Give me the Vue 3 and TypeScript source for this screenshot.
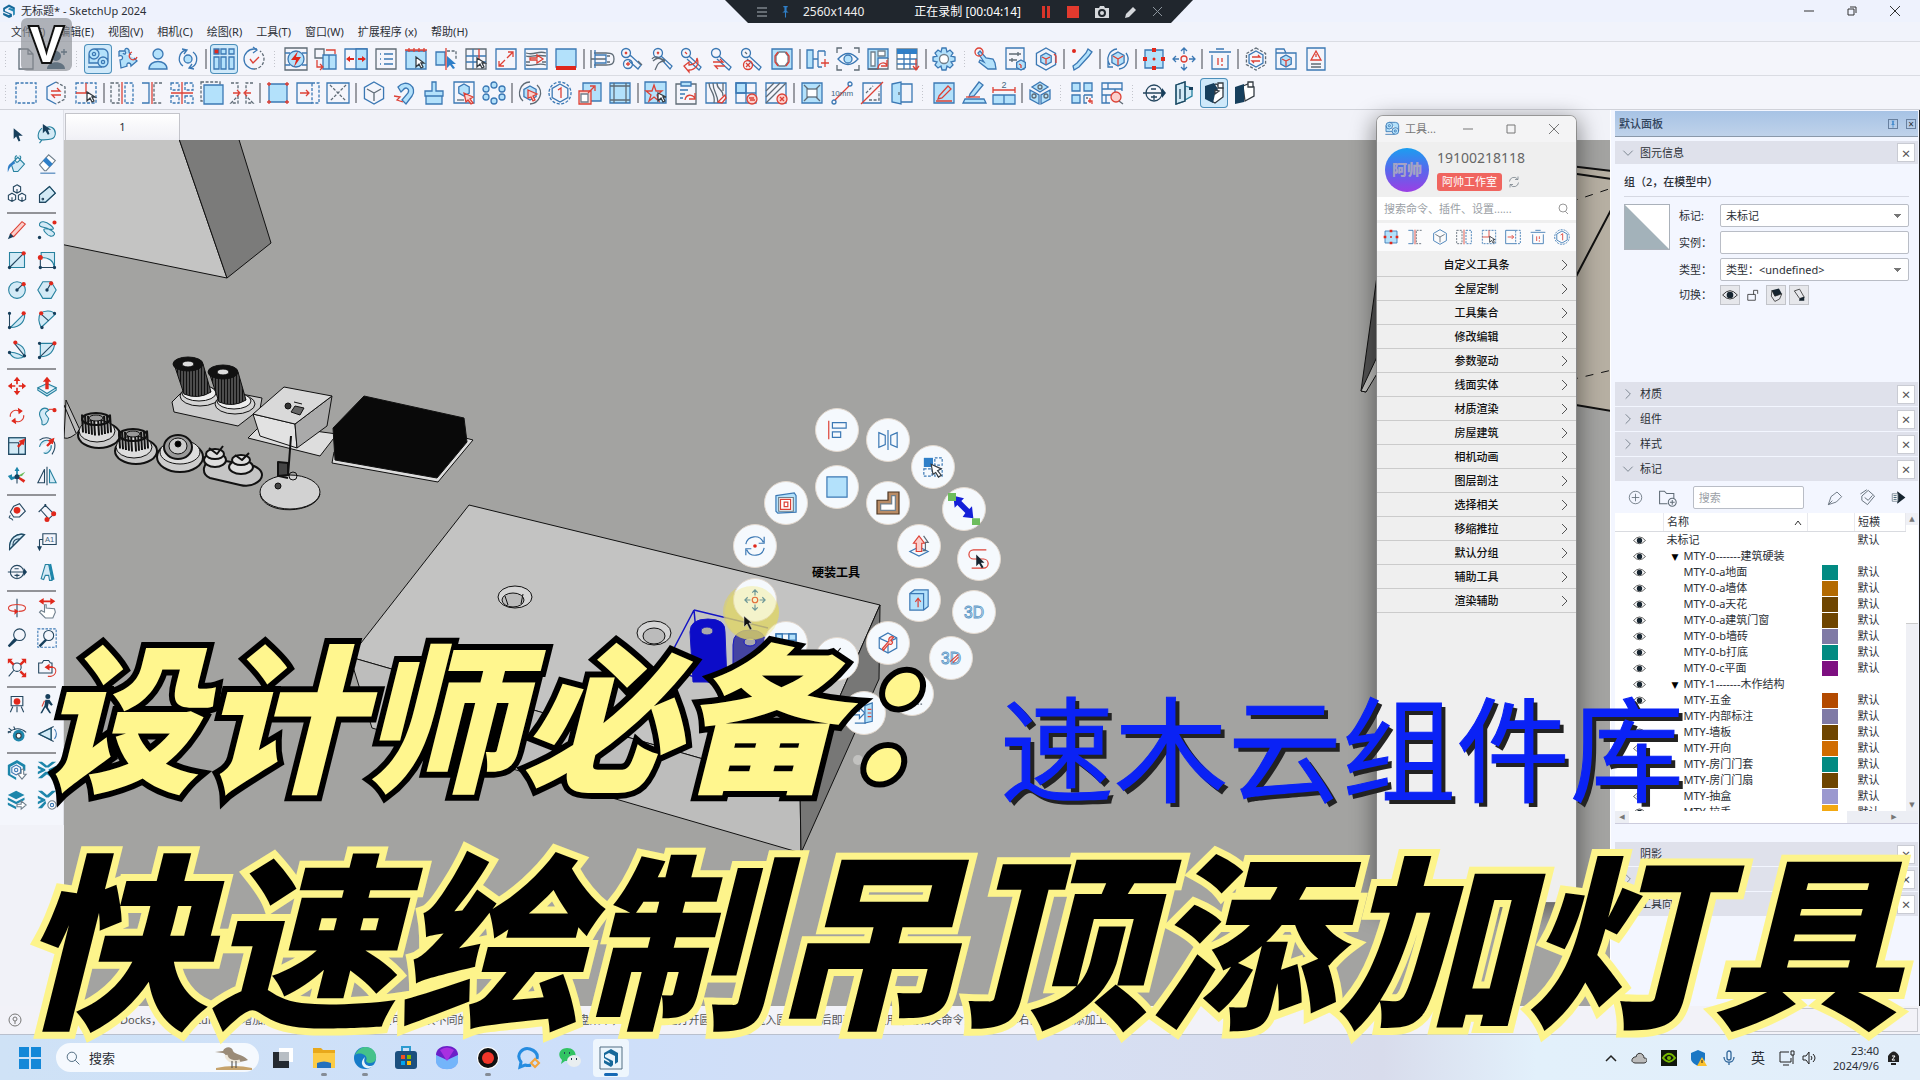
<script setup lang="ts">
import { h, ref, type FunctionalComponent } from 'vue'

// Icon notation: "kind:path" parts joined by "|".
// In a path, @cx,cy,r is a circle, #x,y,w,h a rectangle and %cx,cy,r a hexagon.
const kinds: Record<string, Record<string, string>> = {
  b: { stroke: '#3b78b4', fill: 'none' },
  f: { stroke: '#3b78b4', fill: '#b3e1fb' },
  B: { fill: '#2f7fc8' },
  r: { stroke: '#dd4136', fill: 'none' },
  R: { fill: '#e0281c' },
  g: { stroke: '#5f6b76', fill: 'none' },
  G: { fill: '#16242f' },
  d: { stroke: '#3b78b4', fill: 'none', 'stroke-dasharray': '3 1.6' },
  e: { stroke: '#5f6b76', fill: 'none', 'stroke-dasharray': '3 1.6' },
  p: { stroke: '#dd4136', fill: '#fbd0cc' },
  n: { stroke: '#24465f', fill: 'none' },
  N: { fill: '#173f5c' },
  t: { stroke: '#26819f', fill: '#d3eaf6' },
  T: { fill: '#1d86ab' },
  w: { stroke: '#333b42', fill: '#ffffff' },
  k: { stroke: '#222222', fill: 'none' },
  v: { fill: '#1420d8' },
  y: { fill: '#6dbd5c' },
  s: { stroke: '#6f7f8c', fill: '#ffffff' },
  o: { stroke: '#4a3422', fill: '#b98c66' }
}

const expand = (d: string): string =>
  d
    .replace(/@([\d.]+),([\d.]+),([\d.]+)/g, (_m, x, y, r) => `M${+x - +r} ${y}a${r} ${r} 0 1 0 ${2 * +r} 0a${r} ${r} 0 1 0 ${-2 * +r} 0z`)
    .replace(/#([\d.]+),([\d.]+),([\d.]+),([\d.]+)/g, (_m, x, y, w, t) => `M${x} ${y}h${w}v${t}h-${w}z`)
    .replace(/%([\d.]+),([\d.]+),([\d.]+)/g, (_m, x, y, r) => {
      const a = +r * 0.87
      const b = +r / 2
      return `M${x} ${+y - +r}l${a} ${b}v${r}l${-a} ${b}l${-a} ${-b}v${-+r}z`
    })

const icons: Record<string, string> = {
  doc: 'g:M5 2h9l5 5v15H5zM14 2v5h5',
  addUser: 'N:@12,9,5 M3 22c0-9 18-9 18 0z|n:M20 2v6M17 5h6',
  tape: 'f:@8,7,5 @17,15,5 M3 7v9h9M8 2h9a5 5 0 0 1 5 5v8|b:@8,7,1.6 @17,15,1.6 M2 20h14',
  puzzle: 'f:M3 4h6c-1-4 5-3 4 1l2 3M9 4c2 3-1 4-2 2M3 4v5c4-2 5 4 1 4l1 8 6-2c-1-4 4-4 4 0l6-5-3-3|r:M16 5a4 4 0 1 0 5 5',
  user: 'f:@12,7,5 M3 22c0-10 18-10 18 0z',
  sync: 'b:M7 19A9 9 0 0 1 10 3M17 5a9 9 0 0 1-3 16M6 2l5 1-3 4M18 22l-5-1 3-4|f:@12,12,4',
  grid: 'f:#9,2,5,5 #17,2,5,5 #2,10,5,12 #9,10,5,12 #17,10,5,12|R:#2,2,5,5|b:#2,2,5,5',
  clock: 'b:M12 2a10 10 0 0 0 0 20M12 2h3|e:M12 22a10 10 0 0 0 6-18|b:M11 0l4 3-4 3|r:M8 12l3 4 6-6',
  flash: 'g:#1,1,22,22|f:@12,12,8|b:M1 6h5M18 6h5M1 18h5M18 18h5|R:M14 4l-7 9h5l-2 7 7-10h-5z',
  swapDoor: 'g:#1,2,9,9 |f:#9,8,13,14|b:M15 8v14|r:M12 3h9v4M3 13v7h5M6 17l3 3-3 3',
  split: 'b:#1,2,22,20|f:#12,2,11,20|R:M2 12l4-3v2h4v2H6v2zM22 12l-4-3v2h-4v2h4v2z',
  list: 'g:#2,2,20,20|b:M6 7h1M6 12h1M6 17h1M10 7h9M10 12h9M10 17h9',
  sheet: 'f:#2,4,20,18|r:M1 3h22M5 1v4M10 1v4M15 1v4M20 1v4|w:M12 10v10l3-3 2 4 2-1-2-4h3z',
  pickLeft: 'f:#2,5,9,13|r:M12 1v22|e:M13 4h9v8|B:M13 9v12l3-3 3 4 2-1-3-4h4z',
  table: 'g:#2,2,20,20 |b:M2 9h20M2 15h20M9 2v20|r:M15 2v12|w:M13 11v9l3-3 2 4 2-1-2-4h3z',
  expand: 'b:#2,2,20,20|r:M13 11l6-6M14 5h5v5M11 13l-6 6M10 19H5v-5',
  wood: 'b:#1,2,22,20|g:M2 6c8 3 12-3 20 0M2 9c5 2 7-2 20 0M2 18c8 2 12-3 20 0M2 15h4M18 15h4|r:M6 11h7V8l6 4-6 4v-3H6z',
  floor: 'f:#2,2,20,18|R:#2,19,20,4',
  cabinet: 'g:M1 3v18M4 6h12c7 0 8 2 8 6s-1 6-8 6H4M1 12h15|b:M5 3v18M5 8h11v8H5|g:M17 9h3M17 15h3',
  chain: 'b:@6,6,4.5 @8,17,4.5 M10 8l11 10-3 4-9-8|g:M18 14l4 4|r:M5 5l2 2M7 5L5 7M8 15v4M6 17h4',
  chainHand: 'b:@8,6,4.5 M11 9l11 10-2 3-8-9|g:M3 14c5-5 7-2 12 0-8 0-8 6-10 9M2 12c3-5 7 0 13 1|r:M7 5l2 2M9 5L7 7',
  chainRed: 'b:@6,6,4.5 M9 9l12 11-2 3-12-11|r:M4 19l5-4v3c6 0 8-4 8-7 3 7-2 12-8 12v2zM5 5l2 2',
  chainSwap: 'b:@6,6,4.5 M9 9l12 11-2 3-12-11|r:M3 15h10l-3-3M15 19H5l3 3',
  chainX: 'b:@6,6,4.5 M9 9l12 11-2 3-12-11|r:@8,18,4.5 M6 16l4 4M10 16l-4 4|g:M5 5l2 2',
  mirrorBox: 'f:#2,2,20,20|s:M9 5h6l3 4v6l-3 4H9l-3-4V9z|r:M8 5L5 9v6l3 4M16 5l3 4v6l-3 4',
  joint: 'f:#1,3,6,18|b:M7 12h5M12 4h7M12 4v16M12 20h4M19 4v5|r:M19 12v8M15 16h8',
  eye: 'g:M1 6V1h5M18 1h5v5M23 18v5h-5M6 23H1v-5|b:M2 12q10-11 20 0q-10 11-20 0z|f:@12,12,4',
  plan: 'f:M2 2h20v9H12v11H2z|s:#5,5,4,14 #12,4,7,5|g:M22 11v11H2|r:M12 22c0-6 6-8 9-4M21 13v6h-6',
  gridDown: 's:#1,2,20,20|B:#1,2,20,5|b:M1 12h20M1 17h20M8 5v17M14 5v17|r:M20 12v10M17 19l3 4 3-4',
  gear: 'f:M10 1h4l1 4 3-2 3 3-2 3 4 1v4l-4 1 2 3-3 3-3-2-1 4h-4l-1-4-3 2-3-3 2-3-4-1v-4l4-1-2-3 3-3 3 2z|s:@12,12,4.5',
  point: 'f:M6 4l6 7 7 1 2 4 1 6h-8l-9-7 1-2 4 2-6-9z|r:@5,5,4',
  sliders: 'b:#2,1,18,21|g:M5 7h12M5 13h8M14 5v4M8 11v4|f:%17,18,5|r:M17 18v3M17 18l-2-1',
  hexBox: 'b:%12,12,11|f:%12,12,6|r:M12 12v5M12 12l-4-2M12 12l4-2M20 7l2 2v7',
  bone: 'f:M18 2l4 3-3 4L9 20l-5 3-1-4 4-3L16 6z|R:@4,4,2',
  cubeTurn: 'b:M4 18A10 10 0 0 1 11 2M20 6a10 10 0 0 1-7 16M2 13v7h5|f:%12,12,7|r:M12 12v6M12 12l-5-3M12 12l5-3',
  selectBox: 'f:#3,3,18,18|R:#10,1,4,4 #10,19,4,4 #1,10,4,4 #19,10,4,4 @12,12,1.5',
  move4: 'b:M12 1v6M9 4l3-3 3 3M12 23v-6M9 20l3 3 3-3M1 12h6M4 9l-3 3 3 3M23 12h-6M20 9l3 3-3 3|r:@12,12,3',
  trash: 'b:M1 5h22M8 2h8M4 8v14h16V8|r:M10 11v7M14 11v4M14 17v2',
  hexSwap: 'e:%12,12,11|b:%12,12,8|r:M8 10h8l-2-2M16 14H8l2 2',
  folder: 'b:M2 22V2h8l2 4h10v16z M2 6h10|f:%12,14,6|r:M12 14v5M12 14l-4-2M12 14l4-2',
  warn: 'b:#3,1,18,22|r:M12 4l5 9H7zM12 7v3|g:M7 17h10M7 20h10',
  dashBox: 'd:#2,2,20,20',
  hexDash: 'b:M12 1L3 6v12l9 5|e:M12 1l9 5v12l-9 5|r:M7 10h9l-3-3M17 14H8l3 3',
  dashPick: 'd:#2,2,20,20|r:M2 12h13M12 2v10|w:M13 11v9l3-3 2 4 2-1-2-4h3z',
  dashMirror: 'e:#1,2,8,20|d:#15,2,8,20|r:M12 1v22',
  gap: 'b:M2 2h7v20H2|e:M22 2h-8v20h8|r:M12 1v22',
  four: 'd:#1,2,8,7 #15,2,8,7 #1,15,8,7 #15,15,8,7|r:M12 1v22M1 12h22',
  solid: 'e:#1,1,19,19|f:#4,4,19,19',
  squeeze: 'e:M1 2h7v7M8 15v7H1zM23 2h-7v7M16 15v7h7z|r:M3 12h6M7 9l3 3-3 3M21 12h-6M17 9l-3 3 3 3',
  corner: 'f:#3,3,18,18|r:M1 3h4M3 1v4M19 3h4M21 1v4M1 21h4M3 19v4M19 21h4M21 19v4',
  toRight: 'b:M16 2H1v20h15|d:M16 2h7v20h-7z|r:M4 12h9M10 9l3 3-3 3',
  cross: 'b:#1,2,22,20|e:M4 4l16 16M20 4L4 20',
  cube: 'b:%12,12,11|g:M12 12v8M12 12L5 8M12 12l7-4',
  magnet: 'f:M6 6C14-3 26 6 20 15l-6 8-4-4 6-7c2-4-2-7-5-3L9 11z|r:M2 15l6 1-3 3 6 2',
  brush: 'f:M10 1h4v9h7v5H3v-5h7zM4 15h16v8H4z',
  cubePick: 'b:#2,1,20,21|f:%12,9,6|g:M5 19h7|p:M12 12l9 4-3 2 3 4-2 1-3-4-2 2z',
  ring: 'f:@12,4,3 @12,20,3 @4,8,3 @20,8,3 @4,16,3 @20,16,3',
  turnHex: 'g:M5 20A11 11 0 0 1 12 1M19 4a11 11 0 0 1-7 19|f:%12,12,7|p:M10 9l9 4-4 2 2 4-2 1-2-4-3 1z',
  hexOne: 'd:@12,12,11|b:%12,12,9|r:M10 9l3-2v10',
  scaleBox: 'f:#5,2,18,18|p:#1,10,12,13|s:#3,13,7,8|r:M10 12l6-6M12 5h5v5',
  frame: 'f:#2,2,20,20|g:M6 2v20M18 2v20M2 5h20M2 19h20',
  starPick: 'f:#1,1,21,21|r:M10 4l2 6h6l-5 4 2 6-5-4-5 4 2-6-5-4h6z|w:M14 12v8l3-3 2 4 2-1-2-4h3z',
  clip: 'g:#2,3,20,20|f:#7,1,10,4|b:M6 9h8M6 13h5M6 17h3|r:M11 19c1-6 7-6 10-2M21 12v6h-6',
  grain: 'b:#2,2,20,20|g:M5 2c0 8 7 10 5 20M9 2c0 9 5 11 5 20M13 2c0 8 6 5 6 13M19 2v8|r:M14 21l7-7 1 3-4 5z',
  quad: 'f:#2,2,10,10|b:#2,2,20,20|b:M12 2v20M2 12h20|p:@18,18,5 |r:M15 17h5M21 19h-5',
  stripeX: 'b:#2,2,20,20|g:M2 10l8-8M2 16L16 2M2 22L22 2|p:@18,18,5|r:M16 16l4 4M20 16l-4 4',
  explode: 'f:#2,2,20,20|s:#7,8,10,8|g:M4 4l4 4M20 4l-4 4M4 20l4-4M20 20l-4-4',
  measure: 'b:@4,21,2 @20,3,2|r:M5 19L19 5|x:12,15,8,10mm',
  slash: 'b:#3,2,18,20|r:M1 23L23 1|e:M6 12l7-7M9 19h10v-9',
  openDoor: 'b:M11 3h11v18H11|f:M2 3l9-2v22l-9-2z|g:M9 11v3',
  pencilBox: 'f:#2,2,20,20|r:M7 15l9-10 3 3-9 9-4 1zM4 20h16',
  pencilBase: 'f:M8 13l9-12 4 3-9 11-5 1zM3 18h19l2 4H1z|r:M4 16h14',
  dims: 'f:#1,14,22,9|b:M12 14v9|r:M1 9h22M1 6v6M23 6v6|x:12,7,9,2',
  cubes: 'f:M12 1l8 5-8 5-8-5zM2 9l9 5v9l-9-5zM22 9l-9 5v9l9-5z|g:@12,6,2 @6,15,2 @18,15,2',
  apps: 'f:#2,2,8,8 #14,2,8,8 #2,14,8,8|b:M14 14h8v3M14 14v8h3|r:M18 20h4v3M20 17v5|g:M16 17h2',
  brick: 'b:M22 10V2H2v20h8M2 8h20M2 14h9M8 2v6M15 8v4M6 14v8|p:@16,16,5|g:M19 20l4 3',
  compass: 'n:@12,12,8 M1 12h22M12 14v5|N:M20 7l4 5-4 5z|n:M9 8h5M9 16h6',
  boxTeal: 't:M4 4l9-3v19l-9 3zM13 5l7 2v8l-7 4z|n:M4 4l9-3v19l-9 3zM8 8v10|N:M17 6h4v3h-4z',
  boxHouse: 'w:M6 7l8-4 7 4v9l-8 6-7-4z|N:M3 5l9-3 4 6-3 5-2 9-8-4z|w:M16 2h5v5h-5zM13 9l4 1-4 3z',
  boxDark: 'w:M11 5l5-2 6 3v9l-9 5z|N:M3 6l9-3v18l-9 2z|w:M16 1h5v5h-5z',
  arrow: 'N:M8 5v13l3-3 3 6 2-1-2-6h5z',
  lasso: 't:M6 5c-6 5-6 14-1 14 7 0 17 1 17-8 0-6-6-9-10-7M3 23l3-4|N:M7 0v11l3-3 3 5 2-1-2-5h4z',
  bucket: 't:M5 12L13 4l8 8-8 9h-5zM12 2c-4 0-2 8 0 8s7-7 3-8|B:M5 11c-5 2-4 8-4 11 2-5 3-8 9-11L8 8z',
  eraser: 's:M3 13L14 1l8 7-11 12H9z|B:M7 8l8 8 4-4-8-8z|b:M4 23h18',
  assets: 'n:%12,6,5 %6,16,5 %18,16,5 M12 6v5M6 16v5M18 16v5',
  tag: 't:M3 13L15 3l7 8-12 11H3z|n:@7,18,1 M3 13L15 3l7 8-12 11H3z',
  pencil: 'p:M4 17L18 2l4 3L8 20z|N:M1 23l3-7 4 4z',
  squiggle: 't:M3 5c1-5 8-3 13 1s5 6-1 5-9-1-5 4 9 6 11 2c1-3-5-5-9-7S2 9 3 5z|R:@21,3,2.5|N:@3,21,2',
  rect: 't:#3,3,18,18|n:M3 21L20 4|R:@20,4,2.5|N:@3,21,2',
  rect3: 't:M5 3h16v18c-1-8-7-12-16-12z|n:M4 9v12h17|R:@4,9,3|N:@4,21,2 @21,21,2',
  circle: 't:@12,12,10|n:M12 12l7-7|R:@20,5,2.5|N:@12,12,2',
  polygon: 't:M7 2h10l6 10-6 10H7L1 12z|n:M12 12l4-7|R:@17,4,2.5|N:@12,12,2',
  arc1: 't:M4 21c14 0 18-10 17-17z|n:M3 4v16|R:@20,4,2.5|N:@3,4,2 @3,21,2',
  arc2: 't:M4 4c-4 7 0 15 1 17L22 5C18 0 9 0 4 4z|n:M5 5l9 8|R:@5,4,2.5|N:@21,4,2 @6,21,2',
  arc3: 't:M9 4c13 2 14 12 11 16C12 15 5 14 3 15c4 9 14 8 18 4|n:M9 4l12 15|R:@10,3,2.5|N:@3,15,2 @21,19,2',
  pie: 't:M4 20V4h17c0 9-6 16-17 16z|n:M4 20L20 4|R:@21,4,2.5|N:@3,4,2 @3,21,2',
  move: 'R:M12 1l4 5h-3v4h-2V6H8zM12 23l4-5h-3v-4h-2v4H8zM1 12l5-4v3h4v2H6v3zM23 12l-5-4v3h-4v2h4v3z',
  push: 't:M1 14l11-5 11 5-11 7zM1 14v3l11 7 11-7v-3|R:M12 1l5 6h-3v9h-4V7H7z',
  rotate: 'r:M4 13c-1-5 5-10 10-7M20 11c1 5-5 10-10 7|R:M13 2l6 4-5 4zM11 22l-6-4 5-4z',
  follow: 't:M4 6c3-5 8-4 10-1-7 4-3 5 0 10-1 6-5 9-8 7 2-7-6-9-2-16z|r:M14 4h7|R:@21,5,2.5',
  scale: 't:#2,2,20,20|n:M2 2h20v20H2zM2 8h12v14|R:M12 12l4-4-2-2 8-3-2 8-2-1-4 4z',
  offset: 't:M3 13c2-8 9-9 12-7M8 20c4 3 10-3 9-9|n:M3 5c7-5 15-3 18 3 2 6-1 11-3 14|R:M11 11l4-4-2-2 8-3-2 8-2-1-4 4z',
  axes: 'n:M12 12v9|R:M13 12l9 5-2 3-8-6z|T:M12 1l3 5h-2v7h-2V6H9zM1 12l5-2v3l6-1v2l-7 3z|y:M22 7l-4 5-7 1 7-4z|N:@12,13,3',
  flip: 'n:M1 20L9 4v16zM12 1v22|t:M23 20L15 4v16z',
  tapeM: 'n:M8 5l7-3 7 9-7 7H8l-4-6zM4 16c-4 5 2 2 3 6|R:@12,10,4',
  dim: 'n:M4 9L13 19M9 3l10 10M2 12L11 3M12 22l10-9|R:@20,14,3 @12,21,3',
  protractor: 't:M3 21C2 7 12 1 21 3z|n:M3 21C2 7 12 1 21 3zM7 16c0-6 3-8 8-8M3 21L21 3',
  label: 'n:#7,2,16,13|n:M3 9h4M3 9v10|N:M0 17h6l-3 6z|x:15,12,9,A1',
  text3d: 't:M5 20L10 3l4 0 4 19h-3l-1-6h-4l-2 5z|T:M14 3l3-1 4 19-3 1z',
  orbit: 'n:M12 1v22|r:M10 8C-1 8-1 16 10 16M14 8c11 0 11 8 0 8M3 10c3-3 15-3 18 0|R:M9 13l5 3-5 4z',
  pan: 's:M9 8v9l-4-2-2 2 7 7h9l3-7-1-4-10-1V8z|R:M2 4l6-4v3h8V0l6 4-6 4V5H8v3z',
  zoom: 'n:@15,8,7 M10 13L2 22|N:M9 12L1 21l2 2 9-8z',
  zoomWin: 'd:#1,1,22,22|n:@14,9,6|N:M10 13l-8 8 2 2 8-8z',
  zoomAll: 'n:@12,11,5 M8 15l-6 7|R:M1 1h6L5 3l4 4-2 2-4-4-2 2zM23 1h-6l2 2-4 4 2 2 4-4 2 2zM23 23h-6l2-2-4-4 2-2 4 4 2-2z',
  prev: 'n:M16 6h2v12H2V6h4l2-3h6l2 3|R:M9 11l6-4v3h4v2h-4v3z|r:M19 11c5 1 5 9-2 11h-4',
  camera: 'n:#5,3,14,11|n:M7 15l-3 7M17 15l3 7M12 15v7|R:@12,9,4',
  walk: 'N:@13,3,3 M10 7h5l4 6-2 1-3-3-1 5 4 7h-2l-5-7-4 7H4l5-9z|r:M9 8l-3 7',
  look: 'T:@14,14,7|n:M1 11c7-6 15-7 22-1M2 5l4 3M8 3l2 4M1 9l4 1|w:@14,14,3',
  section: 't:M17 5v14L2 12z|n:M17 5v14M2 12L20 3M2 12l18 9|b:M21 6c3 4 3 8 0 12',
  suHex: 'T:M12 0l10 6v7h-3V8l-7-4-8 4v9l7 4v3L1 18V6z|b:%11,12,6|b:@11,12,2 |s:M17 16v-5h3v6h3l-5 6-5-6z',
  suX: 'T:M1 2h5l6 5 6-5h5l-9 7h-4zM1 22h5l6-5 6 5h5l-9-8h-4zM1 7l9 4v2l-9 4v-3l4-2-4-2zM23 7l-9 4v2l9 4v-3l-4-2 4-2z',
  suStack: 'T:M11 1l10 5-10 5L1 6zM1 9l10 5 10-5v3l-10 5-10-5zM1 15l10 5v3L1 18z|s:M12 17h5v-4l6 5-6 5v-3h-5z',
  suXGear: 'T:M1 1h5l6 5 6-5h5l-9 8h-3zM1 22h5l5-6-1-3zM1 7l9 4v2l-9 4v-3l4-2-4-2z|s:@18,18,5 |b:@18,18,2',
  align: 'r:M3 2v20|b:#7,4,15,6 #7,14,9,6',
  mirror: 'b:M2 4l7 3v10l-7 3zM22 4l-7 3v10l7 3zM12 1v22',
  pickQuad: 'B:#2,2,10,10|d:#14,2,8,8 #2,14,9,8 #14,14,8,8|w:M10 9l11 5-4 2 4 5-3 2-3-5-3 2z',
  stretch: 'v:M4 2l8 2-2 2 6 6 2-2 1 9-8-1 2-3-6-6-2 2z|y:#0,0,6,6 #18,19,6,5',
  spline: 'r:M20 2H6a5 5 0 0 0 0 10h11a5 5 0 0 1 0 10H4|G:M9 7v13l3-3 3 5 2-1-3-5h4z',
  three: 'z:12,18,17,3D',
  threeNo: 'z:12,18,17,3D|r:M11 16l9-8M14 17l6-6',
  knife: 'f:M7 14L18 2l5 5-11 12z|b:M7 14l-5 5 2 3 8-4M2 23h10|r:@15,10,3|e:M12 23h11',
  exit: 'b:M2 1h12M2 23h12M1 10h6V6l6 6-6 6v-4H1z|f:M13 4l8-3v20l-8 2z|r:M16 8h4M16 12h4M16 16h4',
  plane: 'f:#1,1,22,22',
  boxRed: 'f:M1 4l20-3 2 3v18l-20 1-2-2z|s:#4,6,16,15|r:#6,8,11,11 #10,11,4,5',
  rotate2: 'b:M2 10a10 10 0 0 1 19-2M22 14a10 10 0 0 1-19 2M22 2v7h-6M2 22v-7h6|R:@12,12,2',
  wall: 'o:M12 0h12v24H0V9h12z|s:M16 4h4v16H4v-7h12z',
  extrude: 'b:M2 18l10-5 10 5-10 5z|p:M9 18V9H6l6-8 6 8h-3v9z|g:M17 1l5 7h-3v9h-3',
  boxUp: 'f:M2 5l5-4h15v18l-5 4H2z|b:M2 5h15v18|r:M11 20V11M8 14l3-4 3 4',
  tiles: 'f:#1,2,7,7 #15,2,8,7 #8,9,7,7 #1,16,7,6|b:#1,2,22,20|b:M8 2v20M15 2v20M1 9h22M1 16h22',
  tool: 'b:%12,12,11|b:M3 7l9 4 9-4M12 11v12|p:M6 18l7-8c-1-4 3-6 5-4l-3 3 2 2c0 3-3 3-4 2l-6 7z',
  close: 'k:M8 0l4 5 4-5M8 12l8 8',
  chevD: 'g:M4 8l8 8 8-8', chevR: 'g:M8 4l8 8-8 8',
  search: 'n:@10,10,8 M16 16l7 7', refresh: 'g:M3 11a9 9 0 0 1 16-5M21 13a9 9 0 0 1-16 5M20 1v6h-6M4 23v-6h6',
  seen: 'k:M1 12q11-13 22 0q-11 12-22 0z|G:@12,12,5', lock: 'k:#3,11,13,10|k:M13 11V4h7v6',
  shadowA: 'G:M5 4l12-3 5 9-12 4z|k:M5 4l5 10 12-4-4 9-8 4-6-9z',
  shadowB: 'k:M4 5l9-3 8 14-8 2z|G:M13 18l8-3v7h-9z',
  plus: 'g:@12,12,10 M12 6v12M6 12h12', folderPlus: 'g:M12 20H2V4h6l3 3h9v6|g:@18,18,5 M18 15v6M15 18h6',
  penTag: 'g:M2 22l4-12 9-7 7 7-8 8zM2 22l6-6', tags: 'g:M4 10l9-8 9 8-10 12-8-6zM2 7l9-6M8 12l5 4 6-7',
  export: 'G:M10 2l13 10-13 10z|s:#2,6,9,12|n:M4 9h5M4 12h5M4 15h5',
  pin: 'B:M8 2h8v2h-2v7l4 3H6l4-3V4H8zM11 14h2v9h-2z'
}

const Glyph: FunctionalComponent<{ name: string; size?: number }> = (props) => {
  const size = props.size ?? 24
  const parts = icons[props.name].split('|').map((part) => {
    const kind = part[0]
    const body = part.slice(2)
    if (kind === 'x' || kind === 'z') {
      const [x, y, fs, label] = body.split(',')
      const paint = kind === 'x' ? { fill: '#44667f' } : { fill: '#fff', stroke: '#5f9ac8' }
      return h('text', { x, y, 'font-size': fs, 'text-anchor': 'middle', 'font-family': 'Liberation Sans, sans-serif', ...paint }, label)
    }
    return h('path', { d: expand(body), 'stroke-width': 1.3, ...kinds[kind] })
  })
  return h('svg', { width: size, height: size, viewBox: '0 0 24 24', fill: 'none', 'aria-hidden': 'true', style: 'display:block;flex:none;overflow:visible' }, parts)
}
Glyph.props = ['name', 'size']

// "|" is a separator, ":" the grip that starts a new toolbar.
const row1 = ': doc addUser : tape puzzle user sync | grid clock : flash swapDoor split list sheet pickLeft table expand wood floor | cabinet chain chainHand chainRed chainSwap chainX mirrorBox | joint eye plan gridDown | gear : point sliders hexBox | bone | cubeTurn | selectBox move4 | trash | hexSwap folder warn'.split(' ')
const row2 = ': dashBox hexDash dashPick | dashMirror gap four solid squeeze | corner toRight cross | cube magnet brush cubePick ring | turnHex hexOne scaleBox frame | starPick clip grain quad stripeX | explode measure slash openDoor : pencilBox pencilBase dims | cubes : apps brick : compass boxTeal boxHouse boxDark'.split(' ')
const pressed = ['tape', 'grid', 'boxHouse']
const side = [
  'arrow lasso bucket eraser assets tag',
  'pencil squiggle rect rect3 circle polygon arc1 arc2 arc3 pie',
  'move push rotate follow scale offset axes flip',
  'tapeM dim protractor label compass text3d',
  'orbit pan zoom zoomWin zoomAll prev',
  'camera walk look section',
  'suHex suX suStack suXGear'
].map((g) => g.split(' '))

const menus = ['文件(F)', '编辑(E)', '视图(V)', '相机(C)', '绘图(R)', '工具(T)', '窗口(W)', '扩展程序 (x)', '帮助(H)']

const radial: [string, number, number][] = [
  ['align', 773, 290], ['mirror', 824, 300], ['pickQuad', 869, 327], ['stretch', 900, 369], ['spline', 915, 419],
  ['three', 910, 472], ['threeNo', 887, 518], ['knife', 848, 554], ['exit', 800, 573],
  ['plane', 773, 347], ['boxRed', 722, 363], ['rotate2', 691, 406], ['move4', 691, 460], ['tiles', 722, 503],
  ['close', 773, 519], ['tool', 824, 503], ['boxUp', 855, 460], ['extrude', 855, 406], ['wall', 824, 363]
]

const quick = ['selectBox', 'gap', 'cube', 'dashMirror', 'dashPick', 'toRight', 'trash', 'hexOne']
const groups = ['自定义工具条', '全屋定制', '工具集合', '修改编辑', '参数驱动', '线面实体', '材质渲染', '房屋建筑', '相机动画', '图层剖注', '选择相关', '移缩推拉', '默认分组', '辅助工具', '渲染辅助']

interface Tag { name: string; color?: string; level: number }
const tags: Tag[] = [
  { name: '未标记', level: 0 },
  { name: 'MTY-0-------建筑硬装', level: 1 },
  { name: 'MTY-0-a地面', color: '#028a82', level: 2 },
  { name: 'MTY-0-a墙体', color: '#b36a00', level: 2 },
  { name: 'MTY-0-a天花', color: '#6e4500', level: 2 },
  { name: 'MTY-0-a建筑门窗', color: '#6e4500', level: 2 },
  { name: 'MTY-0-b墙砖', color: '#7f7aa5', level: 2 },
  { name: 'MTY-0-b打底', color: '#028a82', level: 2 },
  { name: 'MTY-0-c平面', color: '#7d0f80', level: 2 },
  { name: 'MTY-1-------木作结构', level: 1 },
  { name: 'MTY-五金', color: '#b34a00', level: 2 },
  { name: 'MTY-内部标注', color: '#7f7aa5', level: 2 },
  { name: 'MTY-墙板', color: '#6e4500', level: 2 },
  { name: 'MTY-开向', color: '#d06c00', level: 2 },
  { name: 'MTY-房门门套', color: '#028a82', level: 2 },
  { name: 'MTY-房门门扇', color: '#6e4500', level: 2 },
  { name: 'MTY-抽盒', color: '#9b99cf', level: 2 },
  { name: 'MTY-拉手', color: '#f3a912', level: 2 }
]
const downlights = [[97, 432, 18], [134, 448, 18]]
const fins = [-14, -11, -8, -5, -2, 2, 5, 8, 11, 14]
const tagQuery = ref('')
const command = ref('')
const instance = ref('')
</script>

<template>
  <div class="app">
    <header class="titlebar">
      <svg class="logo" width="14" height="14" viewBox="0 0 24 24"><path d="M12 1l10 5v4l-10-5-7 4v3l12 5v5l-5 2-10-5v-4l9 4 3-1L2 13V7z" fill="#16699a" /><path d="M22 9v9l-3 2v-7l-9-4 3-2z" fill="#2487b5" /></svg>
      <h1>无标题* - SketchUp 2024</h1>
      <div class="win-ctl">
        <button aria-label="最小化"><svg width="10" height="10"><path d="M0 5h10" stroke="#333" /></svg></button>
        <button aria-label="还原"><svg width="10" height="10" fill="none" stroke="#333"><path d="M1 3h6v6H1zM3 1h6v6" /></svg></button>
        <button aria-label="关闭"><svg width="10" height="10"><path d="M0 0l10 10M10 0L0 10" stroke="#333" /></svg></button>
      </div>
    </header>
    <nav class="menubar"><button v-for="m in menus" :key="m">{{ m }}</button></nav>

    <div v-for="(row, r) in [row1, row2]" :key="r" class="toolbar">
      <template v-for="(it, i) in row" :key="i">
        <span v-if="it === '|'" class="sep"></span>
        <span v-else-if="it === ':'" class="grip"></span>
        <button v-else class="tool" :class="{ on: pressed.includes(it) }" :aria-label="it"><Glyph :name="it" /></button>
      </template>
    </div>

    <main class="work">
      <aside class="side">
        <div class="side-in">
          <div v-for="(g, i) in side" :key="i" class="side-group">
            <button v-for="it in g" :key="it" :aria-label="it"><Glyph :name="it" :size="20" /></button>
          </div>
        </div>
      </aside>

      <section class="stage">
        <div class="scenes"><button class="scene">1</button></div>
        <div class="canvas">
          <svg class="model" width="1546" height="866" viewBox="64 140 1546 866" stroke-linejoin="round">
            <defs>
              <pattern id="ribs" width="3" height="6" patternUnits="userSpaceOnUse"><rect width="3" height="6" fill="#111" /><path d="M2 0v6" stroke="#888" stroke-width="1" /></pattern>
            </defs>
            <g stroke="#111" stroke-width="1">
              <path d="M60 130H176L227 278L60 244z" fill="#c4c4c3" />
              <path d="M176 130H236L271 243L227 278z" fill="#7b7b7a" />
              <path d="M469 505L880 605L800 787L350 657z" fill="#c3c3c2" />
              <path d="M350 657L800 787L801 853L372 728z" fill="#bdbdbc" />
              <path d="M880 605L879 679L801 853L800 787z" fill="#777776" />
              <ellipse cx="515" cy="597" rx="17" ry="11" fill="#d5d5d5" /><ellipse cx="513" cy="600" rx="11" ry="7" fill="#bbb" /><path d="M505 596l3 9 M523 594l-2 10" />
              <ellipse cx="654" cy="633" rx="17" ry="12" fill="#d5d5d5" /><ellipse cx="654" cy="636" rx="11" ry="8" fill="#bbb" />
              <path d="M172 402L190 384L262 398L260 409L238 426L174 412z" fill="#ccc" />
              <g v-for="(p, i) in [[0, 0], [35, 8]]" :key="i" :transform="`translate(${p[0]} ${p[1]})`">
                <ellipse cx="200" cy="396" rx="20" ry="10" fill="#d4d4d4" />
                <ellipse cx="199" cy="393" rx="17" ry="8" fill="#eee" />
                <path d="M174 364L184 394Q198 400 211 392L203 364z" fill="url(#ribs)" />
                <ellipse cx="188" cy="364" rx="15" ry="7" fill="#111" /><ellipse cx="188" cy="364" rx="6" ry="3" fill="#ddd" />
              </g>
              <path d="M248 438L262 424L337 434L320 456z" fill="#ddd" />
              <path d="M253 414L295 424L297 448L260 436z" fill="#e2e2e2" />
              <path d="M295 424L332 396L327 426L297 448z" fill="#aaa" />
              <path d="M284 387L332 396L295 424L253 414z" fill="#d9d9d9" />
              <circle cx="288" cy="406" r="3" fill="#333" /><path d="M291 412l4-6 9 2-4 7zM294 402l8 2" fill="#666" />
              <path d="M334 452L368 412L473 440L438 482L332 463z" fill="#ddd" />
              <path d="M364 396L464 418L467 442L437 478L335 460L333 428z" fill="#090909" />
              <path d="M66 400L80 430Q70 440 64 438zM64 405l12 28" fill="#bbb" />
              <g v-for="(d, i) in downlights" :key="i">
                <ellipse :cx="d[0] + 2" :cy="d[1] + 3" :rx="d[2] + 3" ry="13" fill="#c8c8c8" stroke-width="2" />
                <ellipse :cx="d[0]" :cy="d[1] - 1" :rx="d[2]" ry="11" fill="#ddd" />
                <path v-for="f in fins" :key="f" :d="`M${d[0] + f} ${d[1] + 4 - Math.abs(f) / 4}l-1 -18`" stroke-width="2" />
                <ellipse :cx="d[0] - 1" :cy="d[1] - 13" rx="14" ry="6" fill="none" stroke-width="2" />
                <ellipse :cx="d[0] - 1" :cy="d[1] - 14" rx="7" ry="3" fill="#999" />
              </g>
              <ellipse cx="180" cy="457" rx="23" ry="15" fill="#ccc" stroke-width="2" /><ellipse cx="180" cy="452" rx="20" ry="12" fill="#ddd" />
              <ellipse cx="178" cy="447" rx="14" ry="12" fill="#999" stroke-width="2" /><ellipse cx="178" cy="446" rx="9" ry="8" fill="#ccc" /><circle cx="178" cy="444" r="3" />
              <path d="M204 468Q206 458 220 460L254 466Q266 472 260 480Q252 488 240 485L210 478Q203 475 204 468z" fill="#c5c5c5" stroke-width="2" />
              <g fill="#ddd" stroke-width="2"><ellipse cx="215" cy="460" rx="11" ry="7" /><ellipse cx="241" cy="467" rx="12" ry="7" /><ellipse cx="215" cy="454" rx="9" ry="5" /><ellipse cx="241" cy="460" rx="9" ry="5" /><path d="M209 448l8 6 6-8M235 455l7 5 7-7" fill="none" /></g>
              <ellipse cx="290" cy="492" rx="30" ry="17" fill="#d2d2d2" />
              <path d="M260 494c4 22 56 20 60 0" fill="none" />
              <path d="M278 462l10 1v12l-10 1zM279 476l9 2M291 436l-3 40" fill="#444" stroke-width="2" /><circle cx="293" cy="476" r="4" fill="none" /><circle cx="278" cy="486" r="3" fill="#444" />
              <path d="M1382 240L1361 391L1366 392L1384 350z" fill="#555" />
              <path d="M1361 391L1366 392L1384 362v-20z" fill="#c3c3c0" />
              <path d="M1570 166L1612 172V412L1570 404z" fill="#b6afa2" stroke="none" />
              <path d="M1570 166L1612 171M1570 173L1612 179M1570 288L1612 208M1570 404L1612 411" fill="none" stroke-width="2" />
              <path d="M1570 202L1612 188M1570 380L1612 370" fill="none" stroke-dasharray="8 8" />
            </g>
            <g stroke="#1414c4" fill="none">
              <path d="M694 610L768 628M694 610L672 652M694 610L700 675M680 672L770 703" stroke-width="1.5" />
              <path d="M690 632q0-13 18-13t17 13l2 50h-34z" fill="#0c0cc8" /><ellipse cx="707" cy="631" rx="6" ry="4" fill="#aaa" />
              <path d="M733 645q0-15 17-15t15 15v30h-32z" fill="#4444a2" /><ellipse cx="750" cy="642" rx="6" ry="4" fill="#aaa" />
            </g>
            <circle cx="858" cy="760" r="5" fill="#c2c2c0" />
            <circle cx="751" cy="612" r="28" fill="#d8cf72" opacity=".7" />
          </svg>
          <button v-for="[name, x, y] in radial" :key="name" class="petal" :aria-label="name" :style="{ left: x - 22 + 'px', top: y - 22 + 'px' }"><Glyph :name="name" :size="name === 'stretch' ? 32 : 22" /></button>
          <strong class="petal-title">硬装工具</strong>
          <svg class="halo" width="60" height="60"><circle cx="30" cy="30" r="27" fill="#f0e64a" opacity=".28" /><path d="M22 33v11l3-3 3 6 2-1-3-6h3z" fill="#111" stroke="#ddd" stroke-width=".5" /></svg>
        </div>

        <div class="float">
          <div class="float-title">
            <Glyph name="tape" :size="16" /><span>工具...</span>
            <button aria-label="最小化"><svg width="10" height="10"><path d="M0 5h10" stroke="#777" /></svg></button>
            <button aria-label="最大化"><svg width="10" height="10"><path d="M1 1h8v8H1z" stroke="#777" fill="none" /></svg></button>
            <button aria-label="关闭"><svg width="10" height="10"><path d="M0 0l10 10M10 0L0 10" stroke="#777" /></svg></button>
          </div>
          <div class="account">
            <div class="avatar">阿帅</div>
            <div><div class="phone">19100218118</div><div class="studio"><span class="badge">阿帅工作室</span><Glyph name="refresh" :size="12" /></div></div>
          </div>
          <label class="find"><input v-model="command" placeholder="搜索命令、插件、设置......" aria-label="搜索命令" /><svg width="10" height="11" fill="none" stroke="#999"><circle cx="5" cy="5" r="4" /><path d="M7 8l3 3" /></svg></label>
          <div class="quick"><button v-for="q in quick" :key="q" :aria-label="q"><Glyph :name="q" :size="16" /></button></div>
          <ul class="groups"><li v-for="g in groups" :key="g"><button><span>{{ g }}</span><svg width="7" height="12"><path d="M1 1l5 5-5 5" fill="none" stroke="#555" /></svg></button></li></ul>
        </div>
      </section>

      <aside class="tray">
        <div class="tray-head"><strong>默认面板</strong><button aria-label="固定"><Glyph name="pin" :size="8" /></button><button aria-label="关闭">×</button></div>
        <div class="panel-head first"><Glyph name="chevD" :size="14" /><span>图元信息</span><button aria-label="关闭图元信息">×</button></div>
        <div class="entity">
          <strong>组（2，在模型中）</strong>
          <div class="entity-body">
            <svg class="swatch" width="46" height="46"><path d="M0 0l46 46H0z" fill="#a3b2ba" /></svg>
            <form class="fields">
              <label for="f-tag">标记:</label><select id="f-tag"><option>未标记</option></select>
              <label for="f-inst">实例：</label><input id="f-inst" v-model="instance" />
              <label for="f-type">类型：</label><select id="f-type"><option>类型：&lt;undefined&gt;</option></select>
              <span>切换：</span>
              <div class="toggles">
                <button type="button" class="box" aria-label="可见"><Glyph name="seen" :size="16" /></button><button type="button" aria-label="锁定"><Glyph name="lock" :size="14" /></button>
                <button type="button" class="box" aria-label="接收阴影"><Glyph name="shadowA" :size="14" /></button><button type="button" class="box" aria-label="投射阴影"><Glyph name="shadowB" :size="14" /></button>
              </div>
            </form>
          </div>
        </div>
        <div v-for="p in ['材质', '组件', '样式']" :key="p" class="panel-head"><Glyph name="chevR" :size="14" /><span>{{ p }}</span><button :aria-label="'关闭' + p">×</button></div>
        <div class="panel-head"><Glyph name="chevD" :size="14" /><span>标记</span><button aria-label="关闭标记">×</button></div>
        <div class="tag-bar">
          <button aria-label="添加标记"><Glyph name="plus" :size="15" /></button><button aria-label="添加文件夹"><Glyph name="folderPlus" :size="19" /></button>
          <input v-model="tagQuery" placeholder="搜索" aria-label="搜索标记" />
          <button aria-label="标记工具"><Glyph name="penTag" :size="16" /></button><button aria-label="颜色"><Glyph name="tags" :size="17" /></button><button aria-label="详细信息"><Glyph name="export" :size="15" /></button>
        </div>
        <div class="tag-list">
          <div class="tag-scroll">
            <table>
              <thead><tr><th class="c-eye"></th><th class="c-name">名称<svg width="8" height="6"><path d="M1 5l3-4 3 4" fill="none" stroke="#333" /></svg></th><th class="c-col"></th><th>短横</th></tr></thead>
              <tbody>
                <tr v-for="t in tags" :key="t.name">
                  <td class="c-eye"><Glyph name="seen" :size="13" /></td>
                  <td class="c-name" :class="'lv' + t.level"><i v-if="t.level === 1">▼</i>{{ t.name }}</td>
                  <td class="c-col"><span v-if="t.color" :style="{ background: t.color }"></span></td>
                  <td>{{ t.level === 1 ? '' : '默认' }}</td>
                </tr>
              </tbody>
            </table>
          </div>
          <div class="vbar"><i>▲</i><span></span><i>▼</i></div>
        </div>
        <div class="hbar"><i>◀</i><span></span><i>▶</i></div>
        <div class="panel-head"><Glyph name="chevR" :size="14" /><span>阴影</span><button aria-label="关闭阴影">×</button></div>
        <div class="panel-head"><Glyph name="chevR" :size="14" /><span>雾化</span><button aria-label="关闭雾化">×</button></div>
        <div class="panel-head"><Glyph name="chevR" :size="14" /><span>工具向导</span><button aria-label="关闭工具向导">×</button></div>
      </aside>
    </main>

    <footer class="status">
      <svg width="14" height="14" fill="none" stroke="#777"><circle cx="7" cy="7" r="6" /><circle cx="7" cy="6" r="2" /><path d="M7 8v3" /></svg>
      <p>选择工具：Docks，按住Return键可增加选择对象，再次按下Tab键可以切换不同的对齐方式，右键切换圆盘菜单，双击空白处打开圆盘菜单，进入圆盘菜单后即可直接使用常用相关命令，可在菜单右侧设置里添加工具</p>
      <div class="measure"></div>
    </footer>

    <div class="taskbar">
      <button aria-label="开始"><svg width="22" height="22" fill="#1488d8"><path d="M0 0h10v10H0zM12 0h10v10H12zM0 12h10v10H0zM12 12h10v10H12z" /></svg></button>
      <button class="t-search"><Glyph name="search" :size="14" /><span>搜索</span>
        <svg width="40" height="24" viewBox="0 0 40 24"><path d="M3 22q18-4 36 0v2H3z" fill="#c6a36d" /><path d="M2 6l8-1c2-5 9-5 10 0 2 4 8 2 15 9-5 2-12 3-17 0-4-2-5-6-8-7z" fill="#9a8b78" /><path d="M13 9c1 6 8 8 14 6" fill="none" stroke="#eee7da" stroke-width="3" /><path d="M19 15v7M23 15v7" stroke="#444" /></svg>
      </button>
      <div class="apps">
        <button aria-label="任务视图"><svg width="24" height="24"><path d="M8 2h14v14H8z" fill="#fff" /><path d="M2 6h16v16H2z" fill="#242a31" /><path d="M8 6h10v9H8z" fill="#b8bec4" /></svg></button>
        <button class="run" aria-label="文件资源管理器"><svg width="24" height="24"><path d="M1 2h8l2 2h12v18H1z" fill="#e8a81c" /><path d="M1 7h22v15H1z" fill="#fccb45" /><path d="M5 22v-5q7-3 14 0v5z" fill="#2470bd" /></svg></button>
        <button class="run" aria-label="Edge"><svg width="24" height="24"><circle cx="12" cy="12" r="11" fill="#167bc8" /><path d="M2 9C8-5 25 1 23 13c-1 5-9 5-10 2 3-5-5-10-11-6z" fill="#45c28a" /><path d="M12 11c-3 7 3 11 9 8-8 8-17-1-9-8z" fill="#e6f2fb" /></svg></button>
        <button aria-label="Microsoft Store"><svg width="24" height="24"><path d="M8 6V1h8v5" fill="none" stroke="#2c9bd0" stroke-width="2" /><rect x="1" y="5" width="22" height="18" rx="3" fill="#1b4f7e" /><path d="M7 9h4v4H7z" fill="#f25022" /><path d="M13 9h4v4h-4z" fill="#7fba00" /><path d="M7 15h4v4H7z" fill="#00a4ef" /><path d="M13 15h4v4h-4z" fill="#ffb900" /></svg></button>
        <button aria-label="剪辑"><svg width="24" height="24"><rect x="1" y="1" width="22" height="22" rx="9" fill="#8a7cf2" /><path d="M1 9c0-12 22-12 22 0l-11 8z" fill="#6b1fc8" /><path d="M1 9l11 5 11-5v6c0 11-22 11-22 0z" fill="#74b5fa" /><path d="M5 4l7 11 7-11q-7-5-14 0z" fill="#a830e0" /></svg></button>
        <button class="run" aria-label="录屏"><svg width="24" height="24"><circle cx="12" cy="12" r="11" fill="#fff" /><circle cx="12" cy="12" r="10" fill="#111" /><circle cx="12" cy="12" r="6" fill="#f1362a" /></svg></button>
        <button aria-label="企业微信"><svg width="24" height="24" fill="none"><path d="M14 19c-3 1-6 0-6 0l-5 2 1-5C-2 8 6 1 13 3c6 2 8 6 7 10" stroke="#268ce0" stroke-width="3" /><path d="M18 13l4 4-4 4-4-4z" stroke="#f3a33a" stroke-width="2" /></svg></button>
        <button aria-label="微信"><svg width="24" height="24"><path d="M9 2c10 0 12 12 2 13l-4 0-4 3 1-4C-2 8 3 2 9 2z" fill="#31c363" /><ellipse cx="16" cy="15" rx="7" ry="6" fill="#e9eef0" /><path d="M6 7h1M11 7h1M13 13h1M18 13h1" stroke="#245" stroke-width="2" /></svg></button>
        <button class="run active" aria-label="SketchUp"><svg width="24" height="24"><path d="M1 1h22v22H1z" fill="#eaf5fc" stroke="#526f83" /><path d="M12 3l7 4v9l-3 2v-8l-6-3-4 2v2l8 4v4l-2 2-7-4v-3l6 3-1-2-5-3V7z" fill="#16699a" /></svg></button>
      </div>
      <div class="tray-icons">
        <svg width="12" height="8"><path d="M1 7l5-5 5 5" fill="none" stroke="#222" stroke-width="1.5" /></svg>
        <svg width="16" height="12"><path d="M4 11C-2 10 2 4 5 5c1-6 8-4 8 1 5 0 3 5 0 5z" fill="#bbb" stroke="#333" /></svg>
        <svg width="16" height="16"><path d="M0 0h16v16H0z" fill="#10170c" /><path d="M2 8c4-6 9-5 12 0-4 5-8 5-12 0z" fill="none" stroke="#76b900" stroke-width="2" /><circle cx="8" cy="8" r="2" fill="#76b900" /></svg>
        <svg width="16" height="16"><path d="M7 0l7 3v6c0 4-7 7-7 7s-7-3-7-7V3z" fill="#1a77c4" /><path d="M11 7l5 9H6z" fill="#fbc02d" /><path d="M11 10v3" stroke="#222" /></svg>
        <svg width="16" height="16" fill="none" stroke="#31679b" stroke-width="1.3"><rect x="6" y="1" width="4" height="9" rx="2" /><path d="M3 7c0 7 10 7 10 0M8 12v3" /></svg>
        <span>英</span>
        <svg width="16" height="16" fill="none" stroke="#222"><path d="M10 2H1v10h11V8M4 15h6M12 1h3v4h-3zM14 5v9" /></svg>
        <svg width="14" height="14" fill="none" stroke="#222"><path d="M1 5h3l3-4v12L4 9H1zM9 5q2 2 0 4M11 3q4 4 0 8" /></svg>
        <time>23:40<br />2024/9/6</time>
        <svg width="14" height="16"><path d="M1 12V6q6-9 11 0v6z" fill="#222" /><path d="M4 13h5v2H4z" fill="#222" /><path d="M5 6h3l-3 4h3" stroke="#fff" fill="none" /></svg>
      </div>
    </div>

    <div class="recorder">
      <svg width="12" height="12" stroke="#aab2ba"><path d="M1 2h10M1 6h10M1 10h10" /></svg><Glyph name="pin" :size="13" /><span class="res">2560x1440</span>
      <span class="rec">正在录制 [00:04:14]</span>
      <button aria-label="暂停"><svg width="10" height="12" fill="#d8352a"><path d="M1 0h3v12H1zM6 0h3v12H6z" /></svg></button>
      <button aria-label="停止"><svg width="12" height="12"><rect width="12" height="12" fill="#e23a2e" /></svg></button>
      <button aria-label="截图"><svg width="14" height="12"><path d="M0 2h4l1-2h4l1 2h4v10H0z" fill="#d5d8dc" /><circle cx="7" cy="7" r="3" fill="none" stroke="#20262d" stroke-width="2" /></svg></button>
      <button aria-label="画笔"><svg width="12" height="12"><path d="M0 12l1-4 7-7 3 3-7 7z" fill="#d5d8dc" /></svg></button>
      <button aria-label="关闭录制"><svg width="9" height="9"><path d="M0 0l9 9M9 0L0 9" stroke="#8b949c" /></svg></button>
    </div>
    <div class="key">V</div>

    <p class="cap cap-a">设计师必备：</p>
    <p class="cap cap-b">速木云组件库</p>
    <p class="cap cap-c">快速绘制吊顶添加灯具</p>
  </div>
</template>

<style>
body { margin: 0; }
</style>

<style scoped>
.app { position: relative; display: flex; flex-direction: column; min-height: 100vh; overflow: hidden; background: #f1f2f8; color: #2b2f36; font: 11px/16px "Noto Sans", "Noto Sans CJK SC", sans-serif; }
button, input, select { font: inherit; color: inherit; }
button { display: flex; align-items: center; justify-content: center; padding: 0; border: 0; background: none; }
input, select { box-sizing: border-box; min-width: 0; border: 1px solid #b9bdc6; background: #fff; border-radius: 2px; padding: 0 5px; outline: 0; }
input::placeholder { color: #9b9fa6; opacity: 1; }
.titlebar { display: flex; align-items: center; height: 22px; padding: 0 20px 0 2px; gap: 5px; background: #eef2fd; }
h1 { margin: 0; font-size: 11px; font-weight: 400; line-height: 16px; }
.win-ctl { display: flex; gap: 33px; margin-left: auto; }
.menubar { display: flex; align-items: center; gap: 14px; height: 19px; padding-left: 11px; background: #f1f3fb; }
.toolbar { display: flex; align-items: center; height: 34px; box-sizing: border-box; border-top: 1px solid #dadce3; background: #f4f5fb; }
.tool { width: 30px; height: 30px; }
.tool.on { background: #cfe9fa; box-shadow: inset 0 0 0 1px #4d8fba; border-radius: 4px; width: 28px; margin: 0 1px; }
.sep { flex: none; width: 2px; height: 20px; margin: 0 2px; background: #9a9ca3; }
.grip { flex: none; width: 4px; height: 18px; margin: 0 4px; background: radial-gradient(circle, #c3c5cc 1px, transparent 1px) 0 0 / 3px 3px; }
.grip:first-child { margin-right: 3px; }
.work { display: flex; flex: 1; border-top: 1px solid #d0d2d9; }
.side { width: 64px; flex: none; }
.side-in { padding: 9px 2px 10px; background: #f4f6fc; border-right: 1px solid #dfe1e8; }
.side-group { display: grid; grid-template-columns: 30px 30px; }
.side-group + .side-group { padding-top: 6px; background: linear-gradient(#929398, #929398) no-repeat 5px 3px / 49px 2px; }
.side-group button { height: 30px; }
.stage { position: relative; flex: 1; min-width: 0; display: flex; flex-direction: column; }
.scenes { display: flex; align-items: flex-end; height: 30px; }
.scene { width: 115px; height: 27px; margin-left: 1px; border: 1px solid #c3c4ca; border-bottom: 0; background: linear-gradient(#fff, #f0f0f5); }
.canvas { position: relative; flex: 1; overflow: hidden; background: #a3a3a1; }
.model { display: block; position: absolute; left: 0; top: 0; }
.petal { position: absolute; width: 44px; height: 44px; border-radius: 50%; background: #f5f9fd; border: 1px solid #e3d9cf; }
.petal-title { position: absolute; left: 748px; top: 425px; font-size: 12px; color: #000; }
.halo { position: absolute; left: 658px; top: 443px; }
.float { position: absolute; right: 34px; top: 6px; width: 199px; height: 786px; display: flex; flex-direction: column; background: #efefef; border-radius: 6px 6px 0 0; box-shadow: 0 6px 22px 4px #0006, 0 0 0 1px #b4b4b4; }
.float-title { display: flex; align-items: center; height: 26px; padding: 0 17px 0 7px; gap: 5px; color: #777; background: #f4f4f5; border-radius: 6px 6px 0 0; }
.float-title span { margin-right: auto; white-space: nowrap; }
.float-title button { width: 10px; margin-left: 28px; }
.float-title span + button { margin-left: 0; }
.account { display: flex; align-items: center; gap: 8px; height: 55px; padding-left: 8px; }
.avatar { width: 44px; height: 44px; border-radius: 50%; background: linear-gradient(#1b9ef0, #5868ec, #9b3fe4); color: #a5a3c4; font: 900 15px/42px "Noto Sans CJK SC", sans-serif; text-align: center; }
.phone { font-size: 14px; line-height: 20px; color: #666; }
.studio { display: flex; align-items: center; gap: 6px; margin-top: 5px; }
.badge { padding: 0 5px; background: #f0655f; color: #fff; border-radius: 3px; line-height: 18px; }
.find { display: flex; align-items: center; height: 23px; padding: 0 8px 0 2px; background: #fff; }
.find input { flex: 1; border: 0; }
.quick { display: flex; justify-content: space-between; align-items: center; height: 28px; margin-top: 3px; padding: 0 6px; background: #fbfbfc; }
.groups { list-style: none; margin: 2px 0 0; padding: 0; }
.groups li { height: 23px; border-bottom: 1px solid #cbcbcb; }
.groups button { width: 100%; height: 23px; padding: 0 8px 0 15px; font-weight: 500; color: #111; }
.groups span { flex: 1; }
.tray { width: 310px; flex: none; padding: 1px 1px 0 4px; background: #f3f6ff; border-left: 1px solid #fff; border-right: 1px solid #222; box-sizing: border-box; }
.tray-head { display: flex; align-items: center; gap: 8px; height: 25px; margin-bottom: 4px; padding: 0 2px 0 4px; background: linear-gradient(#a7c3e5, #bfd2ea); border-bottom: 1px solid #8a98aa; }
.tray-head strong { flex: 1; color: #31445d; font-weight: 500; }
.tray-head button { width: 10px; height: 10px; border: 1px solid #68809f; font-size: 10px; line-height: 8px; }
.panel-head { display: flex; align-items: center; gap: 5px; height: 24px; margin-bottom: 1px; padding: 0 3px 0 6px; background: #dfe1eb; }
.panel-head.first { height: 23px; margin-bottom: 0; }
.panel-head span { flex: 1; }
.panel-head button { width: 18px; height: 19px; border: 1px solid #c9cbd3; background: #fff; font-size: 15px; color: #555; }
.entity { height: 218px; padding: 10px 9px 0 9px; box-sizing: border-box; }
.entity > strong { display: block; padding-bottom: 6px; border-bottom: 1px solid #d5d8e2; font-weight: 500; }
.entity-body { display: flex; align-items: flex-start; gap: 9px; margin-top: 7px; }
.swatch { flex: none; border: 1px solid #aab1ba; background: #fff; width: 44px; height: 44px; }
.fields { flex: 1; display: grid; grid-template-columns: 33px 1fr; gap: 4px 8px; align-items: center; white-space: nowrap; }
.fields select, .fields input { width: 100%; height: 23px; }
.fields select { appearance: none; background: linear-gradient(to bottom left, #777 50%, transparent 50%) no-repeat right 10px center / 4px 4px, linear-gradient(to bottom right, #777 50%, transparent 50%) no-repeat right 6px center / 4px 4px, #fff; }
.toggles { display: flex; gap: 3px; }
.toggles button { width: 20px; height: 20px; box-sizing: border-box; }
.toggles .box { border: 1px solid #c2c4ca; background: #e6e7eb; }
.tag-bar { display: flex; align-items: center; justify-content: space-between; height: 31px; padding: 0 12px 0 13px; }
.tag-bar input { width: 111px; height: 23px; margin: 0 8px 0 0; }
.tag-list { display: flex; height: 298px; background: #fff; }
.tag-scroll { flex: 1; overflow: hidden; }
table { width: 100%; border-collapse: collapse; table-layout: fixed; }
th, td { height: 16px; padding: 0; line-height: 16px; white-space: nowrap; text-align: left; font-weight: 400; }
th { height: 18px; padding-left: 3px; border-bottom: 1px solid #d9dbe0; border-right: 1px solid #e8e9ee; }
td:last-child { padding-left: 3px; }
.c-eye { width: 45px; }
td.c-eye { padding-left: 18px; width: 29px; }
.c-name { width: 140px; }
th.c-name svg { float: right; margin: 6px 5px 0 0; }
.lv0 { padding-left: 3px; }
.lv1 { padding-left: 8px; }
.lv2 { padding-left: 20px; }
.lv1 i { display: inline-block; width: 12px; font: 9px/12px "DejaVu Sans", sans-serif; color: #000; }
.c-col { width: 43px; }
.c-col span { display: block; width: 16px; height: 15px; margin-left: 14px; }
.vbar { display: flex; flex-direction: column; width: 12px; background: #eff0f5; }
.vbar span { flex: none; height: 98px; background: #fff; border-bottom: 1px solid #ccc; }
.vbar i, .hbar i { font: 7px/12px "DejaVu Sans", sans-serif; color: #777; text-align: center; }
.vbar i:last-child { margin-top: auto; }
.hbar { display: flex; height: 12px; margin-bottom: 18px; border-bottom: 1px solid #ccd; background: #eceef4; }
.hbar i { width: 14px; }
.hbar span { width: 218px; background: #fff; margin-right: 40px; }
.status { display: flex; align-items: center; height: 28px; padding: 0 2px 0 8px; gap: 43px; border-bottom: 1px solid #b9c0ce; background: #f2f2f8; color: #555; }
.status p { flex: 1; min-width: 0; margin: 0; overflow: hidden; white-space: nowrap; }
.measure { width: 184px; height: 22px; border: 1px solid #c7c8cf; }
.taskbar { display: flex; align-items: center; height: 45px; padding: 0 19px; background: linear-gradient(90deg, #cfe2f6, #cddffa 30%, #d6dff3 55%, #d8dcec 72%, #e2f0fb 80%, #e2eefa); }
.t-search { width: 203px; height: 29px; margin-left: 15px; padding: 0 6px 0 10px; gap: 9px; border-radius: 15px; background: #f5f9fe; font-size: 13px; }
.t-search span { flex: 1; text-align: left; }
.apps { display: flex; gap: 5px; margin-left: 6px; }
.apps button { position: relative; width: 36px; height: 38px; border-radius: 4px; }
.apps .active { background: #eef6fd; }
.apps .run::after { content: ""; position: absolute; left: 15px; bottom: 1px; width: 6px; height: 3px; border-radius: 2px; background: #858c96; }
.apps .active::after { left: 11px; width: 14px; background: #1669b5; }
.tray-icons { display: flex; align-items: center; gap: 14px; margin-left: auto; }
.tray-icons span { font-size: 14px; }
.tray-icons svg:nth-of-type(7) { margin-left: -7px; }
.tray-icons time { text-align: right; line-height: 15px; margin-left: 3px; }
.tray-icons time + svg { margin-left: -6px; }
.recorder { position: absolute; left: calc(50% - 235px); top: 0; width: 468px; height: 23px; box-sizing: border-box; display: flex; align-items: center; gap: 11px; padding: 0 31px 0 31px; background: #20262d; clip-path: polygon(0 0, 100% 0, 446px 100%, 23px 100%); color: #eee; font-size: 12px; }
.rec { margin: 0 4px 0 auto; color: #fff; }
.recorder button { margin-left: 5px; }
.key { position: absolute; left: 21px; top: 18px; width: 51px; height: 53px; border-radius: 6px; background: #8a8d94a6; color: #fff; font: 700 50px/54px "Liberation Sans", sans-serif; text-align: center; -webkit-text-stroke: 4px #111; paint-order: stroke fill; }
.cap { position: absolute; margin: 0; white-space: nowrap; font-family: "Noto Sans CJK SC", sans-serif; font-weight: 900; font-style: italic; paint-order: stroke fill; pointer-events: none; }
.cap-a { left: 40px; top: 630px; font-size: 160px; line-height: 160px; color: #fff68e; -webkit-text-stroke: 12px #000; }
.cap-b { left: 1000px; top: 687px; font-size: 114px; line-height: 114px; font-weight: 400; font-style: normal; color: #0a22f5; -webkit-text-stroke: 1px #0a22f5; text-shadow: 4px 4px 0 #222; }
.cap-c { left: 20px; top: 838px; font-size: 188px; line-height: 188px; color: #000; -webkit-text-stroke: 14px #fdf48b; }
</style>
